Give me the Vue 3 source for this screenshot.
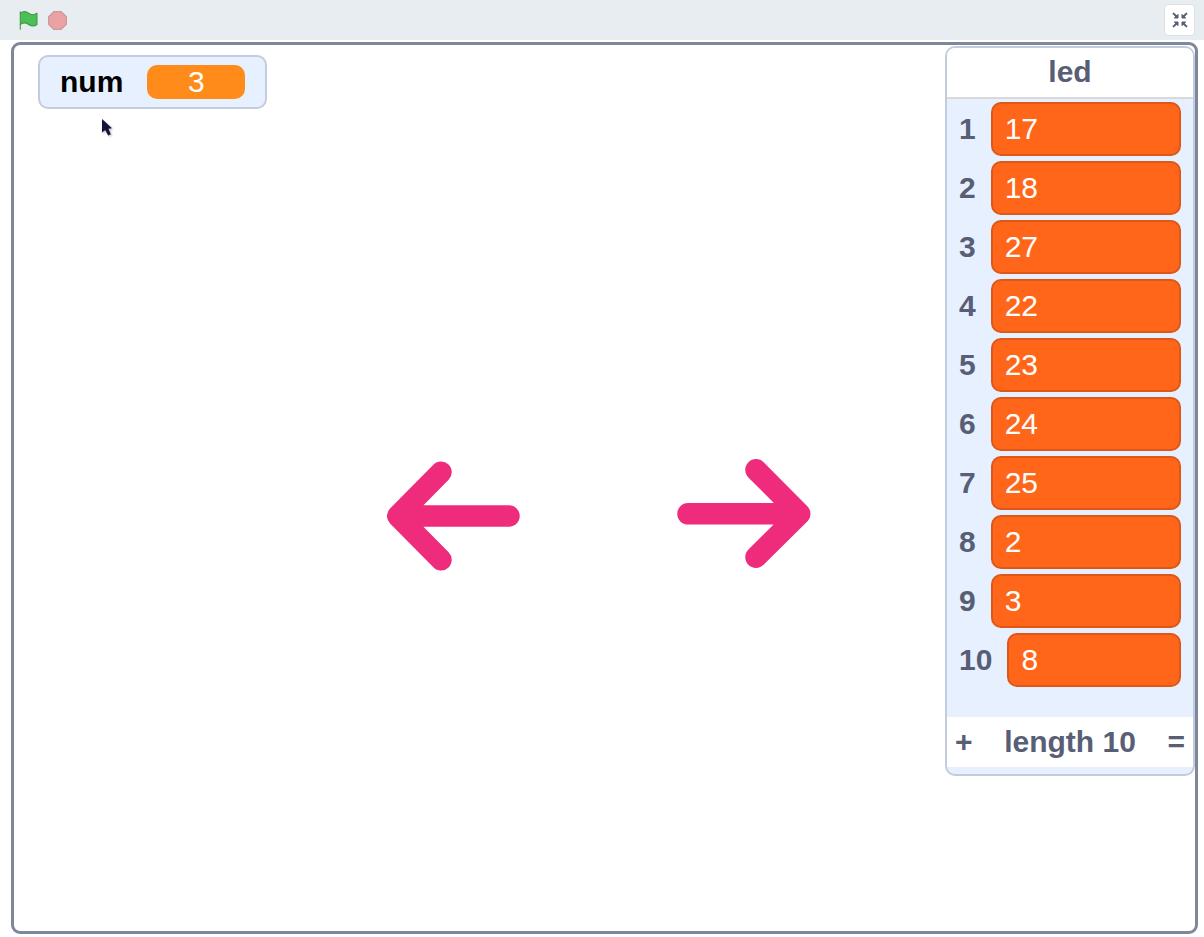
<script setup>
import { ref } from 'vue'

const num = ref(3)
const led = ref([17, 18, 27, 22, 23, 24, 25, 2, 3, 8])
</script>

<template>
  <div class="player">
    <header class="toolbar">
      <div class="controls">
        <button type="button" class="icon-button" aria-label="Go">
          <svg class="flag" viewBox="0 0 16.63 17.5" aria-hidden="true">
            <path d="M.75 2A6.44 6.44 0 0 1 8.44 2a6.44 6.44 0 0 0 7.69 0V12.4a6.44 6.44 0 0 1-7.69 0 6.44 6.44 0 0 0-7.69 0" />
            <path d="M.75 16.75V.75" />
          </svg>
        </button>
        <button type="button" class="icon-button" aria-label="Stop">
          <svg class="stop" viewBox="0 0 14 14" aria-hidden="true">
            <polygon points="4.3 .5 9.7 .5 13.5 4.3 13.5 9.7 9.7 13.5 4.3 13.5 .5 9.7 .5 4.3" />
          </svg>
        </button>
      </div>
      <button type="button" class="shrink" aria-label="Exit full screen">
        <svg viewBox="0 0 16 16" aria-hidden="true">
          <path class="line" d="M1.6 1.6L5 5M14.4 1.6L11 5M1.6 14.4L5 11M14.4 14.4L11 11" />
          <path class="head" d="M6 2.4V6H2.4zM10 2.4V6H13.6zM6 13.6V10H2.4zM10 13.6V10H13.6z" />
        </svg>
      </button>
    </header>

    <main class="stage">
      <div class="monitor variable">
        <span class="name">num</span>
        <output class="value">{{ num }}</output>
      </div>

      <svg class="arrow previous" viewBox="0 0 134 110" role="img" aria-label="Left arrow">
        <path d="M54 11.2L10.7 55L54 98.8M10.7 55H122" />
      </svg>
      <svg class="arrow next" viewBox="0 0 134 110" role="img" aria-label="Right arrow">
        <path d="M79 10.8L122.7 54.8L79 98.2M122.7 54.8H11" />
      </svg>

      <section class="monitor list" aria-labelledby="list-name">
        <h2 id="list-name">led</h2>
        <ol>
          <li v-for="(item, i) in led" :key="i">
            <span class="index">{{ i + 1 }}</span>
            <span class="cell">{{ item }}</span>
          </li>
        </ol>
        <footer>
          <button type="button" class="add" aria-label="Add item">+</button>
          <span>length {{ led.length }}</span>
          <span class="grip">=</span>
        </footer>
      </section>

      <svg class="pointer" viewBox="0 0 16 22" aria-hidden="true">
        <path d="M2 1V14.6L5.2 12L8.2 17.4L10.8 16.2L8.4 10.8L12 10.2z" />
      </svg>
    </main>
  </div>
</template>

<style>
body {
  margin: 0;
  background: #fff;
}
</style>

<style scoped>
.player {
  display: flex;
  flex-direction: column;
  min-height: 100vh;
  font-family: "Liberation Sans", Arial, sans-serif;
  font-size: 30px;
  line-height: 34px;
  color: #575e75;
}

button {
  margin: 0;
  padding: 0;
  border: 0;
  background: none;
  font: inherit;
  color: inherit;
  cursor: pointer;
}

svg {
  display: block;
}

.toolbar {
  display: flex;
  align-items: center;
  justify-content: space-between;
  box-sizing: border-box;
  height: 40px;
  padding: 0 9px 0 19px;
  background: #e8edf1;
}

.controls {
  display: flex;
  gap: 10px;
}

.icon-button svg {
  width: 19px;
  height: 19px;
}

.flag path {
  fill: #4cbf56;
  stroke: #45993d;
  stroke-linecap: round;
  stroke-linejoin: round;
}

.stop {
  opacity: 0.5;
}

.stop polygon {
  fill: #ec5959;
  stroke: #b84848;
  stroke-linejoin: round;
}

.shrink {
  display: grid;
  place-items: center;
  box-sizing: border-box;
  width: 31px;
  height: 32px;
  border: 1px solid #dce1e6;
  border-radius: 4px;
  background: #fff;
}

.shrink svg {
  width: 16px;
  height: 16px;
}

.shrink .line {
  fill: none;
  stroke: #575e75;
  stroke-width: 2;
  stroke-linecap: round;
}

.shrink .head {
  fill: #575e75;
  stroke: #575e75;
  stroke-width: 1;
  stroke-linejoin: round;
}

.stage {
  position: relative;
  flex: 1;
  box-sizing: border-box;
  min-height: 760px;
  margin: 2px 6px 3px 11px;
  border: 3px solid #7f879b;
  border-radius: 9px;
  background: #fff;
}

.monitor {
  position: absolute;
  box-sizing: border-box;
  border: 2px solid #c3ccdc;
  border-radius: 10px;
  background: #e6f0ff;
}

.variable {
  top: 10px;
  left: 24px;
  display: flex;
  align-items: center;
  gap: 24px;
  padding: 8px 20px;
}

.name {
  font-weight: 700;
  color: #000;
}

.value {
  width: 98px;
  border-radius: 10px;
  background: #ff8c1a;
  color: #fff;
  text-align: center;
}

.list {
  top: 1px;
  right: 0;
  width: 250px;
  padding-bottom: 7px;
  overflow: hidden;
  font-weight: 700;
}

.list h2 {
  margin: 0;
  padding: 7px 0 8px;
  border-bottom: 2px solid #d9d9d9;
  background: #fff;
  font-size: 30px;
  text-align: center;
}

.list ol {
  display: grid;
  grid-auto-rows: 1fr;
  height: 591px;
  margin: 0;
  padding: 0 12px 27px;
  list-style: none;
}

.list li {
  display: flex;
  align-items: center;
  gap: 15px;
}

.cell {
  flex: 1;
  box-sizing: border-box;
  padding: 8px 12px;
  border: 2px solid #dd5719;
  border-radius: 10px;
  background: #ff661a;
  color: #fff;
  font-weight: 400;
}

.list footer {
  display: flex;
  align-items: center;
  justify-content: space-between;
  padding: 8px;
  background: #fff;
}

.arrow {
  position: absolute;
  width: 134px;
  height: 110px;
}

.arrow path {
  fill: none;
  stroke: #ef2b7c;
  stroke-width: 21.5;
  stroke-linecap: round;
  stroke-linejoin: round;
}

.previous {
  top: 416px;
  left: 373px;
}

.next {
  top: 414px;
  left: 663px;
}

.pointer {
  position: absolute;
  top: 73px;
  left: 86px;
  width: 16px;
  height: 22px;
  filter: drop-shadow(1px 1px 1px rgba(0, 0, 0, 0.3));
}

.pointer path {
  fill: #14143a;
}
</style>
